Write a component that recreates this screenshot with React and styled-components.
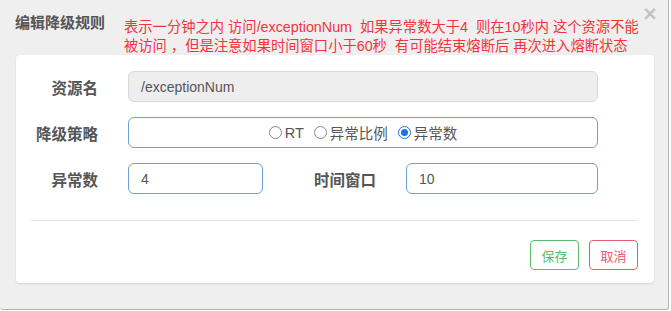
import React from 'react';
import styled, { createGlobalStyle } from 'styled-components';

const Global = createGlobalStyle`
  html, body {
    margin: 0;
    padding: 0;
    background: #fff;
  }
  body {
    font-family: "Liberation Sans", "Noto Sans CJK SC", sans-serif;
  }
`;

const Modal = styled.div`
  box-sizing: border-box;
  width: 669px;
  height: 310px;
  background: #efefef;
  border-right: 1px solid #b4b4b4;
  border-bottom: 1px solid #b4b4b4;
  border-bottom-left-radius: 3px;
  border-bottom-right-radius: 3px;
  padding: 0 14px 0 16px;
  position: relative;
`;

const Header = styled.div`
  display: flex;
  align-items: flex-start;
  height: 55px;
`;

const Title = styled.h4`
  margin: 13px 0 0 -1px;
  width: 109px;
  font-size: 15px;
  line-height: 20px;
  font-weight: bold;
  color: #555;
`;

const Note = styled.div`
  margin-top: 18px;
  font-size: 14.3px;
  line-height: 19px;
  color: #f4343c;
  white-space: nowrap;
`;

const Close = styled.span`
  position: absolute;
  top: 3px;
  right: 10px;
  font-size: 19px;
  line-height: 20px;
  font-weight: bold;
  color: #c2c2c2;
  font-family: "DejaVu Sans", sans-serif;
`;

const Card = styled.div`
  box-sizing: border-box;
  width: 638px;
  height: 228px;
  background: #fff;
  border-radius: 4px;
  box-shadow: 0 1px 2px rgba(0, 0, 0, 0.12);
  padding: 16px 16px 0 15px;
  display: flex;
  flex-direction: column;
`;

const Row = styled.div`
  display: grid;
  grid-template-columns: ${p => p.$cols};
  column-gap: 15px;
  align-items: center;
  height: 31px;
  margin-bottom: 15px;
  width: 567px;
`;

const Label = styled.label`
  text-align: right;
  padding-right: 15px;
  font-size: 15.5px;
  font-weight: bold;
  color: #555;
  font-family: "Noto Sans CJK SC", sans-serif;
`;

const Field = styled.div`
  box-sizing: border-box;
  height: 31px;
  border-radius: 6px;
  border: 1px solid ${p => (p.$disabled ? '#d9d9d9' : '#6f9fd6')};
  background: ${p => (p.$disabled ? '#eeeeee' : '#fff')};
  padding: 0 12px;
  display: flex;
  align-items: center;
  justify-content: ${p => (p.$center ? 'center' : 'flex-start')};
  font-size: 14px;
  color: #555;
`;

const Radio = styled.span`
  display: inline-flex;
  align-items: center;
  margin-right: ${p => (p.$last ? '0' : '10px')};
  font-size: 14.5px;
  color: #555;
`;

const Dot = styled.span`
  box-sizing: border-box;
  width: 13px;
  height: 13px;
  border-radius: 50%;
  margin-right: 3px;
  border: 1px solid ${p => (p.$on ? '#1a73e8' : '#888')};
  display: inline-flex;
  align-items: center;
  justify-content: center;
  &::after {
    content: '';
    width: 7px;
    height: 7px;
    border-radius: 50%;
    background: ${p => (p.$on ? '#1a73e8' : 'transparent')};
  }
`;

const Divider = styled.hr`
  margin: 11px 0 0 0;
  width: 607px;
  border: 0;
  border-top: 1px solid #e5e5e5;
`;

const Footer = styled.div`
  display: flex;
  justify-content: flex-end;
  gap: 10px;
  width: 607px;
  margin-top: 19px;
`;

const Button = styled.button`
  box-sizing: border-box;
  height: 30px;
  width: 49px;
  background: #fff;
  border-radius: 4px;
  border: 1px solid ${p => p.$color};
  color: ${p => p.$color};
  font-size: 13px;
  font-family: "Noto Sans CJK SC", sans-serif;
  padding: 0;
`;

export default function App() {
  return (
    <>
      <Global />
      <Modal>
        <Header>
          <Title>编辑降级规则</Title>
          <Note>
            表示一分钟之内 访问/exceptionNum&nbsp; 如果异常数大于4&nbsp; 则在10秒内 这个资源不能
            <br />
            被访问 ，但是注意如果时间窗口小于60秒&nbsp; 有可能结束熔断后 再次进入熔断状态
          </Note>
          <Close>×</Close>
        </Header>
        <Card>
          <Row $cols="82px 1fr">
            <Label>资源名</Label>
            <Field $disabled>/exceptionNum</Field>
          </Row>
          <Row $cols="82px 1fr">
            <Label>降级策略</Label>
            <Field $center>
              <Radio>
                <Dot />
                RT
              </Radio>
              <Radio>
                <Dot />
                异常比例
              </Radio>
              <Radio $last>
                <Dot $on />
                异常数
              </Radio>
            </Field>
          </Row>
          <Row $cols="82px 135px 113px 1fr">
            <Label>异常数</Label>
            <Field>4</Field>
            <Label>时间窗口</Label>
            <Field>10</Field>
          </Row>
          <Divider />
          <Footer>
            <Button $color="#5cbb6a">保存</Button>
            <Button $color="#e35d6a">取消</Button>
          </Footer>
        </Card>
      </Modal>
    </>
  );
}
